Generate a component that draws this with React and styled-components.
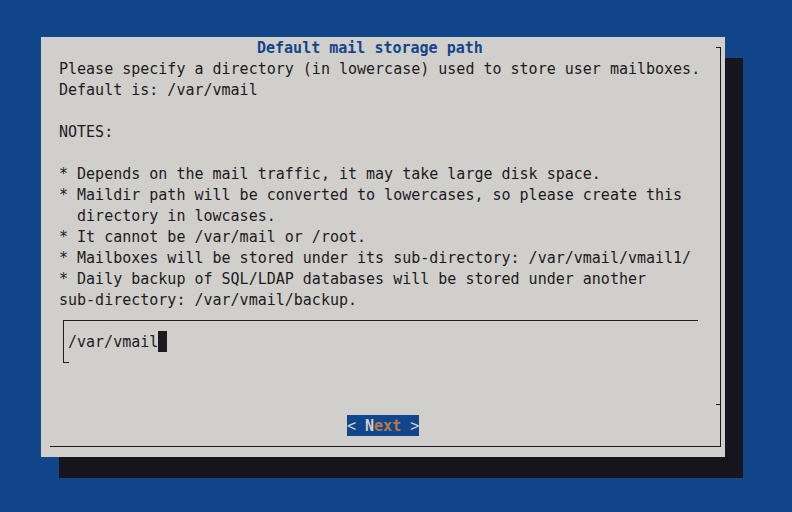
import React from "react";
import styled, { createGlobalStyle } from "styled-components";

const GlobalStyle = createGlobalStyle`
  body {
    margin: 0;
    background: #12468a;
  }
`;

const Screen = styled.div`
  width: 792px;
  height: 512px;
  box-sizing: border-box;
  padding: 37px 0 0 41px;
  background: #12468a;
  overflow: hidden;
`;

const Dialog = styled.div`
  position: relative;
  width: 684px;
  height: 420px;
  background: #d0cfcc;
  box-shadow: 18px 21px 0 #16151e;
  color: #1c1b22;
  font-family: "DejaVu Sans Mono", "Liberation Mono", monospace;
  font-size: 15px;
  line-height: 21px;

  /* right and bottom edge of the box frame, drawn in the dark shade */
  &::before {
    content: "";
    position: absolute;
    top: 10px;
    left: 9px;
    width: 671px;
    height: 400px;
    box-sizing: border-box;
    border-right: 1px solid #1c1b22;
    border-bottom: 1px solid #1c1b22;
  }
`;

const Tick = styled.span`
  position: absolute;
  top: ${(p) => p.top}px;
  left: 675px;
  width: 5px;
  height: 1px;
  background: #1c1b22;
`;

const Title = styled.div`
  position: relative;
  height: 21px;
  padding: 1px 0 0 216px;
  color: #12468a;
  font-weight: bold;
`;

const Message = styled.div`
  padding-left: 18px;
  white-space: pre;
  height: 252px;
`;

const InputBox = styled.div`
  position: relative;
  margin: 9px 0 0 22px;
  width: 635px;
  height: 43px;
  box-sizing: border-box;
  border-top: 1px solid #1c1b22;
  border-left: 1px solid #1c1b22;
  padding: 11px 0 0 4px;
  white-space: pre;

  &::after {
    content: "";
    position: absolute;
    left: 0;
    bottom: 0;
    width: 5px;
    height: 1px;
    background: #1c1b22;
  }
`;

const Cursor = styled.span`
  display: inline-block;
  width: 9px;
  height: 21px;
  margin-top: -1px;
  vertical-align: top;
  background: #1c1b22;
`;

const ButtonRow = styled.div`
  margin-top: 52px;
  padding-left: 306px;
`;

const Button = styled.div`
  width: 72px;
  height: 20px;
  padding-top: 1px;
  overflow: hidden;
  background: #12468a;
  color: #d0cfcc;
  white-space: pre;
`;

const Key = styled.span`
  font-weight: bold;
  color: ${(p) => (p.accent ? "#b57b4b" : "#d0cfcc")};
`;

const message = [
  "Please specify a directory (in lowercase) used to store user mailboxes.",
  "Default is: /var/vmail",
  "",
  "NOTES:",
  "",
  "* Depends on the mail traffic, it may take large disk space.",
  "* Maildir path will be converted to lowercases, so please create this",
  "  directory in lowcases.",
  "* It cannot be /var/mail or /root.",
  "* Mailboxes will be stored under its sub-directory: /var/vmail/vmail1/",
  "* Daily backup of SQL/LDAP databases will be stored under another",
  "sub-directory: /var/vmail/backup.",
].join("\n");

export default function App() {
  return (
    <>
      <GlobalStyle />
      <Screen>
        <Dialog>
          <Tick top={10} />
          <Tick top={367} />
          <Title>Default mail storage path</Title>
          <Message>{message}</Message>
          <InputBox>
            /var/vmail<Cursor />
          </InputBox>
          <ButtonRow>
            <Button>
              {"< "}
              <Key>N</Key>
              <Key accent>ext</Key>
              {" >"}
            </Button>
          </ButtonRow>
        </Dialog>
      </Screen>
    </>
  );
}
